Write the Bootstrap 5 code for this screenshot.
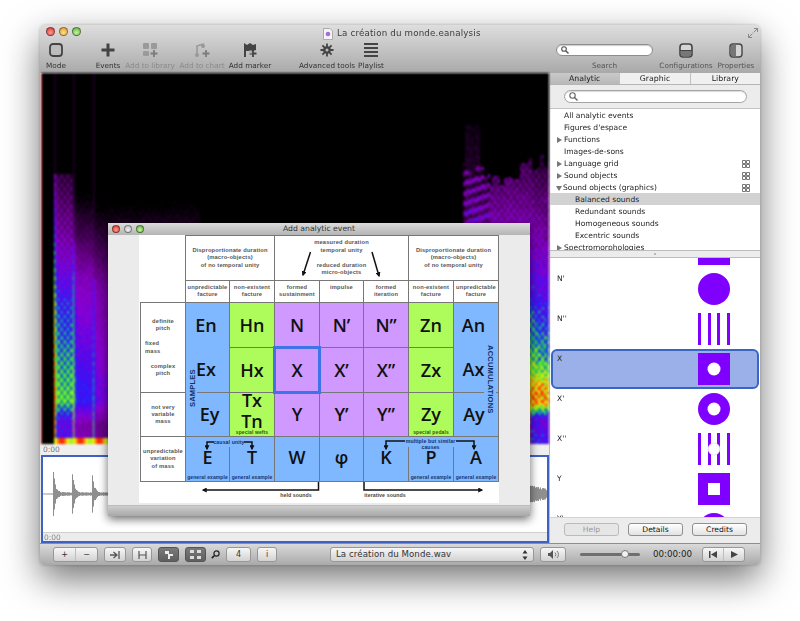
<!DOCTYPE html>
<html lang="fr">
<head>
    <meta charset="UTF-8">
    <meta name="viewport" content="width=device-width, initial-scale=1.0">
    <title>La création du monde.eanalysis</title>
    <link href="https://cdn.jsdelivr.net/npm/bootstrap@5.3.2/dist/css/bootstrap.min.css" rel="stylesheet">
    <style>
        body { background: #fff; font-family: "DejaVu Sans", sans-serif; color: #222; overflow: hidden; }

        /* main window */
        .mac-window { left: 40px; top: 25px; width: 720px; height: 540px; border-radius: 5px 5px 4px 4px; box-shadow: 0 14px 36px rgba(0,0,0,.55), 0 0 3px rgba(0,0,0,.25); overflow: hidden; background: #e8e8e8; filter: blur(.35px); }
        .mac-head { height: 48px; background: linear-gradient(#dedede, #a9a9a9); flex: none; }
        .title-row { height: 17px; padding: 2px 0 0 6px; }
        .light { width: 9px; height: 9px; border-radius: 50%; border: 1px solid rgba(0,0,0,.4); display: block; flex: none; }
        .light-red { background: radial-gradient(circle at 50% 65%, #ff9a90, #d3302a); }
        .light-amber { background: radial-gradient(circle at 50% 65%, #ffe28a, #d9922a); }
        .light-green { background: radial-gradient(circle at 50% 65%, #c8f5a0, #56a83a); }
        .light-off { background: radial-gradient(circle at 50% 65%, #f0f0f0, #b5b5b5); }
        .title-text { font-size: 8.7px; color: #3c3c3c; letter-spacing: .02em; }
        .title-box { left: 283px; top: 2px; }
        .resize-ico { right: 2px; top: 3px; }

        .tool-row { height: 31px; align-items: flex-start; }
        .tool { flex: none; display: flex; flex-direction: column; align-items: center; height: 31px; font-size: 7.3px; color: #333; line-height: 9px; white-space: nowrap; }
        .tool svg { height: 16px; margin-bottom: 3px; display: block; }
        .tool-off { color: #8b8b8b; }
        .t32 { width: 32px; } .t40 { width: 40px; } .t44 { width: 44px; } .t52 { width: 52px; } .t56 { width: 56px; } .t50 { width: 50px; } .t97 { width: 97px; }
        .ml-20 { margin-left: 20px; } .ml-27 { margin-left: 27px; } .ml-8 { margin-left: 8px; } .ml-5 { margin-left: 5px; }
        .tool-search { height: 12px; margin: 2px 0 5px; border-radius: 7px; background: #fff; border: 1px solid #8d8d8d; box-shadow: inset 0 1px 1px rgba(0,0,0,.2); padding-left: 4px; display: flex; align-items: center; width: 97px; }
        .tool-search svg { height: 8px; margin: 0; }
        .tool-soft { color: #555; }
        .tool-end { width: 4px; }

        .mac-main { height: 470px; flex: none; }
        .left-pane { width: 509px; flex: none; padding-left: 1px; background: #e8e8e8; }
        .spectro { width: 508px; height: 371px; display: block; filter: blur(.8px); }
        .time-strip { height: 11px; font-size: 7.5px; line-height: 11px; color: #777; background: #efefef; padding-left: 2px; }
        .wave-box { height: 88px; border: 2px solid #3d62c4; background: #fff; }
        .wave-cv { width: 504px; height: 75px; display: block; }
        .wave-strip { height: 9px; font-size: 7.5px; line-height: 9px; color: #888; background: #ececec; border-top: 1px solid #cfcfcf; padding-left: 1px; }

        /* right panel */
        .right-pane { width: 211px; flex: none; background: #fff; border-left: 1px solid #bbb; }
        .seg-tabs { height: 12px; font-size: 7.8px; line-height: 11px; background: #f0f0f0; border-bottom: 1px solid #b5b5b5; flex: none; }
        .seg-tab { flex: 1 1 0; text-align: center; color: #222; border-right: 1px solid #c0c0c0; }
        .seg-tab:last-child { border-right: 0; }
        .seg-on { background: linear-gradient(#c9c9c9, #b9b9b9); }
        .filter-row { height: 24px; flex: none; background: #ececec; border-bottom: 1px solid #c4c4c4; padding: 5px 13px 0 14px; }
        .filter-box { height: 13px; border-radius: 7px; background: #fff; border: 1px solid #a5a5a5; box-shadow: inset 0 1px 1px rgba(0,0,0,.15); padding-left: 4px; display: flex; align-items: center; }
        .tree-wrap { height: 141px; flex: none; overflow: hidden; }
        .tree-row.list-group-item { height: 12px; padding: 2px 10px 0 14px; border: 0; border-radius: 0; background: transparent; font-size: 7.55px; line-height: 10px; color: #222; display: flex; align-items: center; white-space: nowrap; }
        .tree-row.tree-sub { padding-left: 25px; }
        .tree-row.tree-sel { background: #d2d2d2; }
        .tree-open, .tree-shut { width: 0; height: 0; margin-left: -7px; margin-right: 2px; flex: none; }
        .tree-shut { border-left: 5px solid #777; border-top: 3px solid transparent; border-bottom: 3px solid transparent; }
        .tree-open { border-top: 5px solid #777; border-left: 3px solid transparent; border-right: 3px solid transparent; margin-left: -8px; margin-right: 1px; }
        .split-bar { height: 8px; flex: none; background: #ececec; border-top: 1px solid #bdbdbd; border-bottom: 1px solid #bdbdbd; display: flex; justify-content: center; align-items: center; }
        .split-dot { width: 2px; height: 2px; background: #aaa; border-radius: 50%; }
        .glyph-wrap { height: 259px; flex: none; overflow: hidden; }
        .glyph-list { margin-top: -29px; }
        .glyph-row { height: 40px; padding: 3px 2px 0 5px; font-size: 7.5px; color: #222; flex: none; border: 2px solid transparent; line-height: 10px; }
        .glyph-row svg { width: 32px; height: 32px; margin: -1px 26px 0 0; flex: none; display: block; }
        .glyph-on { background: #9bb0e8; border-color: #3a65c4; border-radius: 6px; margin: 0 1px; padding-left: 4px; }
        .glyph-on svg { margin-right: 25px; }
        .foot-row { height: 26px; flex: none; background: #ececec; border-top: 1px solid #d4d4d4; padding: 5px 13px 0 14px; gap: 9px; }
        .btn.foot-btn { width: 55px; height: 13px; padding: 0; font-size: 7.6px; line-height: 11px; color: #111; background: linear-gradient(#fff, #e2e2e2); border: 1px solid #8f8f8f; border-radius: 3px; }
        .btn.foot-btn:disabled { color: #999; border-color: #bbb; background: #e6e6e6; opacity: 1; }

        /* bottom bar */
        .mac-bar { height: 22px; flex: none; background: linear-gradient(#dadada, #a9a9a9); padding: 3px 0 0 13px; gap: 6px; border-top: 1px solid #8e8e8e; }
        .btn.bar-btn { height: 15px; padding: 0; font-size: 8px; line-height: 13px; color: #333; background: linear-gradient(#f7f7f7, #d2d2d2); border: 1px solid #979797; border-radius: 3px; display: flex; align-items: center; justify-content: center; flex: none; }
        .btn.bar-dark { background: linear-gradient(#7a7a7a, #5f5f5f); border-color: #555; }
        .bw-45 { width: 45px; } .bw-22 { width: 22px; } .bw-21 { width: 21px; } .bw-20 { width: 20px; } .bw-25 { width: 25px; } .bw-26 { width: 26px; } .bw-43 { width: 43px; }
        .split-half { flex: 1 1 0; height: 100%; display: flex; align-items: center; justify-content: center; border-right: 1px solid #bdbdbd; }
        .split-half:last-child { border-right: 0; }
        .loupe { width: 9px; margin-left: -1px; flex: none; display: flex; align-items: center; height: 15px; }
        .btn.bar-popup { width: 204px; margin-left: 47px; justify-content: space-between; padding: 0 5px; font-size: 8.6px; color: #333; letter-spacing: .01em; }
        .vol-track { width: 60px; height: 15px; margin-left: 8px; flex: none; display: flex; align-items: center; position: relative; }
        .vol-line { height: 3px; width: 100%; background: #6f6f6f; border-radius: 2px; }
        .vol-thumb { width: 8px; height: 8px; border-radius: 50%; background: #f2f2f2; border: 1px solid #777; left: 41px; top: 3px; }
        .clock { width: 40px; margin-left: 7px; font-size: 8.7px; line-height: 15px; color: #222; flex: none; white-space: nowrap; }
        .ml-3p { margin-left: 3px; }

        /* dialog */
        .sheet { left: 68px; top: 198px; width: 422px; height: 293px; background: #ebebeb; box-shadow: 0 3px 10px rgba(0,0,0,.6); z-index: 5; border-radius: 3px 3px 0 0; }
        .sheet-head { height: 12px; flex: none; background: linear-gradient(#dcdcdc, #b4b4b4); padding-left: 4px; gap: 4px; }
        .sheet-head .light { width: 8px; height: 8px; }
        .sheet-title { left: 0; right: 0; top: 0; font-size: 7.7px; line-height: 12px; text-align: center; color: #333; }
        .sheet-body { height: 270px; flex: none; padding-left: 31px; }
        .sheet-foot { height: 11px; flex: none; background: linear-gradient(#cdcdcd, #a8a8a8); border-top: 1px solid #bbb; }

        .chart { width: 360px; height: 268px; padding-left: 1px; background: #fff; display: grid; grid-template-columns: 45px 44px 45px 45px 44px 45px 45px 45px; grid-template-rows: 45px 22px 45px 45px 44px 45px 22px; font-family: "Open Sans", sans-serif; }
        .box { border: 1px solid #777; margin: 0 -1px -1px 0; position: relative; display: flex; flex-direction: column; align-items: center; justify-content: center; text-align: center; }
        .note { font-size: 5.75px; font-weight: 700; line-height: 7.3px; color: #555; font-family: "Liberation Sans", sans-serif; letter-spacing: .03em; }
        .note-top { justify-content: flex-start; padding-top: 3px; }
        .big { font-size: 18px; font-weight: 600; line-height: 21px; color: #111; }
        .big-two { justify-content: space-around; padding-right: 3px; }
        .big-two-r { padding: 0 5px 0 0; }
        .tone-blue { background: #80b8ff; }
        .tone-green { background: #aefc5c; }
        .tone-purple { background: #d099ff; }
        .cell-on { border: 3px solid #3f73e8; margin: -1px -2px -2px -1px; z-index: 1; }
        .span-2c { grid-column: span 2; }
        .span-3c { grid-column: span 3; }
        .span-2r { grid-row: span 2; }
        .cap { font-family: "Liberation Sans", sans-serif; left: 0; right: 0; bottom: 1px; font-size: 5px; font-weight: 700; line-height: 6px; color: #17356b; letter-spacing: .02em; white-space: nowrap; }
        .cap-green { color: #2c5a12; }
        .overlay { left: 0; top: 0; width: 360px; height: 268px; z-index: 2; pointer-events: none; }
        .overlay text { font-family: "Liberation Sans", sans-serif; }
        .ov-side { font-size: 7.6px; font-weight: 700; fill: #13306a; letter-spacing: .02em; }
        .ov-tiny { font-size: 5.2px; font-weight: 700; fill: #13306a; letter-spacing: .02em; }
        .ov-gray { font-size: 5.2px; font-weight: 700; fill: #444; letter-spacing: .02em; }
    </style>
</head>
<body>

<div class="mac-window position-absolute d-flex flex-column">
    <!-- title + toolbar -->
    <div class="mac-head position-relative">
        <div class="title-row d-flex gap-1 position-relative">
            <span class="light light-red"></span>
            <span class="light light-amber"></span>
            <span class="light light-green"></span>
            <div class="title-box position-absolute d-flex align-items-center gap-1">
                <svg width="10" height="12" viewBox="0 0 10 12"><path d="M.5.5h6.5l2.500 2.500v8.500h-9z" fill="#f4f4f4" stroke="#aaa"/><circle cx="5" cy="6" r="2.300" fill="#a070d8"/></svg>
                <span class="title-text">La création du monde.eanalysis</span>
            </div>
            <svg class="resize-ico position-absolute" width="10" height="10" viewBox="0 0 10 10"><path d="M5.500 4.500 9.500.5M6 .5h3.500v3.500M4.500 5.500.5 9.500M.5 6v3.500H4" fill="none" stroke="#888"/></svg>
        </div>
        <div class="tool-row d-flex">
            <div class="tool t32">
                <svg width="14" height="16" viewBox="0 0 14 16"><rect x="1" y="2" width="12" height="12" rx="3" fill="#bdbdbd" stroke="#444" stroke-width="1.800"/></svg>
                Mode
            </div>
            <div class="tool t32 ml-20">
                <svg width="14" height="16" viewBox="0 0 14 16"><path d="M7 1.500v13M.5 8h13" stroke="#444" stroke-width="3"/></svg>
                Events
            </div>
            <div class="tool t52 tool-off">
                <svg width="16" height="16" viewBox="0 0 16 16"><g fill="#9a9a9a"><rect x="1" y="1" width="6" height="6" rx="1"/><rect x="9" y="1" width="6" height="6" rx="1"/><rect x="1" y="9" width="6" height="5" rx="1"/></g><path d="M12 8v7M8.500 11.500h7" stroke="#7d7d7d" stroke-width="1.800"/></svg>
                Add to library
            </div>
            <div class="tool t52 tool-off">
                <svg width="16" height="16" viewBox="0 0 16 16"><path d="M3 14V4l6-2v4" fill="none" stroke="#999" stroke-width="1.600"/><circle cx="3" cy="13" r="2" fill="#999"/><circle cx="9" cy="4" r="2" fill="#999"/><path d="M12 8v7M8.500 11.500h7" stroke="#7d7d7d" stroke-width="1.800"/></svg>
                Add to chart
            </div>
            <div class="tool t44">
                <svg width="16" height="16" viewBox="0 0 16 16"><path d="M2 15V1l3 2 3-2 3 2 3-1v6l-3 1H4v6z" fill="#444"/><path d="M11 8v7M7.500 11.500h7" stroke="#444" stroke-width="1.800"/><path d="M7 8.500h3v3H7z" fill="#b0b0b0"/></svg>
                Add marker
            </div>
            <div class="tool t56 ml-27">
                <svg width="16" height="16" viewBox="0 0 16 16"><circle cx="8" cy="8" r="3.800" fill="#444"/><path d="M8 1.500v13M1.500 8h13M3.400 3.400l9.200 9.200M12.600 3.400l-9.200 9.200" stroke="#444" stroke-width="1.800"/><circle cx="8" cy="8" r="1.500" fill="#bbb"/></svg>
                Advanced tools
            </div>
            <div class="tool t32">
                <svg width="14" height="16" viewBox="0 0 14 16"><path d="M0 2h14M0 6h14M0 10h14M0 14h14" stroke="#444" stroke-width="2"/></svg>
                Playlist
            </div>
            <div class="tool t97 ms-auto">
                <div class="tool-search"><svg width="8" height="8" viewBox="0 0 8 8"><circle cx="3" cy="3" r="2.300" fill="none" stroke="#555" stroke-width="1.100"/><path d="m5 5 2.500 2.500" stroke="#555" stroke-width="1.400"/></svg></div>
                <span class="tool-soft">Search</span>
            </div>
            <div class="tool t50 ml-8">
                <svg width="14" height="16" viewBox="0 0 14 16"><rect x="1" y="2" width="12" height="13" rx="3" fill="#d5d5d5" stroke="#444" stroke-width="1.600"/><path d="M1.800 8.500h10.400v4.200a1.500 1.500 0 0 1-1.500 1.500H3.300a1.500 1.500 0 0 1-1.500-1.500z" fill="#777"/><path d="M1 8.500h12" stroke="#444"/></svg>
                <span class="tool-soft">Configurations</span>
            </div>
            <div class="tool t40 ml-5">
                <svg width="14" height="16" viewBox="0 0 14 16"><rect x="1" y="2" width="12" height="13" rx="3" fill="#d5d5d5" stroke="#444" stroke-width="1.400"/><path d="M2 3.500a1 1 0 0 1 1-1h4v12H3a1 1 0 0 1-1-1z" fill="#777"/></svg>
                <span class="tool-soft">Properties</span>
            </div>
            <div class="tool-end"></div>
        </div>
    </div>

    <div class="mac-main d-flex">
        <!-- spectrogram and waveform -->
        <div class="left-pane d-flex flex-column">
            <canvas id="spectro" class="spectro" width="508" height="371"></canvas>
            <div class="time-strip">0:00</div>
            <div class="wave-box">
                <canvas id="wave" class="wave-cv" width="504" height="75"></canvas>
                <div class="wave-strip">0:00</div>
            </div>
        </div>

        <!-- properties panel -->
        <div class="right-pane d-flex flex-column">
            <div class="seg-tabs d-flex">
                <div class="seg-tab seg-on">Analytic</div>
                <div class="seg-tab">Graphic</div>
                <div class="seg-tab">Library</div>
            </div>
            <div class="filter-row">
                <div class="filter-box"><svg width="9" height="9" viewBox="0 0 9 9"><circle cx="3.500" cy="3.500" r="2.700" fill="none" stroke="#666" stroke-width="1.100"/><path d="m5.500 5.500 3 3" stroke="#666" stroke-width="1.400"/></svg></div>
            </div>
            <div class="tree-wrap">
                <ul class="list-group list-group-flush">
                    <li class="list-group-item tree-row">All analytic events</li>
                    <li class="list-group-item tree-row">Figures d'espace</li>
                    <li class="list-group-item tree-row"><span class="tree-shut"></span>Functions</li>
                    <li class="list-group-item tree-row">Images-de-sons</li>
                    <li class="list-group-item tree-row"><span class="tree-shut"></span>Language grid
                        <svg class="ms-auto" width="8" height="8" viewBox="0 0 8 8"><path d="M.5.5h3v3h-3zM4.500.5h3v3h-3zM.5 4.500h3v3h-3zM4.500 4.500h3v3h-3z" fill="none" stroke="#777"/></svg></li>
                    <li class="list-group-item tree-row"><span class="tree-shut"></span>Sound objects
                        <svg class="ms-auto" width="8" height="8" viewBox="0 0 8 8"><path d="M.5.5h3v3h-3zM4.500.5h3v3h-3zM.5 4.500h3v3h-3zM4.500 4.500h3v3h-3z" fill="none" stroke="#777"/></svg></li>
                    <li class="list-group-item tree-row"><span class="tree-open"></span>Sound objects (graphics)
                        <svg class="ms-auto" width="8" height="8" viewBox="0 0 8 8"><path d="M.5.5h3v3h-3zM4.500.5h3v3h-3zM.5 4.500h3v3h-3zM4.500 4.500h3v3h-3z" fill="none" stroke="#777"/></svg></li>
                    <li class="list-group-item tree-row tree-sub tree-sel">Balanced sounds</li>
                    <li class="list-group-item tree-row tree-sub">Redundant sounds</li>
                    <li class="list-group-item tree-row tree-sub">Homogeneous sounds</li>
                    <li class="list-group-item tree-row tree-sub">Excentric sounds</li>
                    <li class="list-group-item tree-row"><span class="tree-shut"></span>Spectromorphologies</li>
                </ul>
            </div>
            <div class="split-bar"><span class="split-dot"></span></div>
            <div class="glyph-wrap">
                <div class="glyph-list d-flex flex-column">
                    <div class="glyph-row d-flex justify-content-between">N
                        <svg viewBox="0 0 32 32"><rect width="32" height="32" fill="#8000ff"/></svg></div>
                    <div class="glyph-row d-flex justify-content-between">N'
                        <svg viewBox="0 0 32 32"><circle cx="16" cy="16" r="16" fill="#8000ff"/></svg></div>
                    <div class="glyph-row d-flex justify-content-between">N''
                        <svg viewBox="0 0 32 32"><path d="M0 0h3v32H0zM10 0h3v32h-3zM19 0h3v32h-3zM29 0h3v32h-3z" fill="#8000ff"/></svg></div>
                    <div class="glyph-row glyph-on d-flex justify-content-between">X
                        <svg viewBox="0 0 32 32"><rect width="32" height="32" fill="#8000ff"/><circle cx="16" cy="16" r="6.500" fill="#fff"/></svg></div>
                    <div class="glyph-row d-flex justify-content-between">X'
                        <svg viewBox="0 0 32 32"><circle cx="16" cy="16" r="16" fill="#8000ff"/><circle cx="16" cy="16" r="6.500" fill="#fff"/></svg></div>
                    <div class="glyph-row d-flex justify-content-between">X''
                        <svg viewBox="0 0 32 32"><path d="M0 0h3v32H0zM10 0h3v32h-3zM19 0h3v32h-3zM29 0h3v32h-3z" fill="#8000ff"/><circle cx="16" cy="16" r="6" fill="#fff" stroke="#e8d0ff" stroke-width=".6"/></svg></div>
                    <div class="glyph-row d-flex justify-content-between">Y
                        <svg viewBox="0 0 32 32"><rect width="32" height="32" fill="#8000ff"/><rect x="10" y="10" width="12" height="12" fill="#fff"/></svg></div>
                    <div class="glyph-row d-flex justify-content-between">Y'
                        <svg viewBox="0 0 32 32"><circle cx="16" cy="16" r="16" fill="#8000ff"/></svg></div>
                </div>
            </div>
            <div class="foot-row d-flex">
                <button class="btn foot-btn" disabled>Help</button>
                <button class="btn foot-btn">Details</button>
                <button class="btn foot-btn">Credits</button>
            </div>
        </div>
    </div>

    <!-- bottom controls -->
    <div class="mac-bar d-flex">
        <div class="btn bar-btn bw-45"><span class="split-half">+</span><span class="split-half">−</span></div>
        <div class="btn bar-btn bw-22"><svg width="11" height="8" viewBox="0 0 11 8"><path d="M0 4h6M3.500 1 7 4 3.500 7M9 0v8" fill="none" stroke="#555" stroke-width="1.300"/></svg></div>
        <div class="btn bar-btn bw-20"><svg width="9" height="8" viewBox="0 0 9 8"><path d="M1 0v8M8 0v8M1 4h7" stroke="#555" stroke-width="1.200"/></svg></div>
        <div class="btn bar-btn bar-dark bw-21"><svg width="10" height="10" viewBox="0 0 10 10"><path d="M1 1h4v3h4v2H6v3H4V4H1z" fill="#eee"/></svg></div>
        <div class="btn bar-btn bar-dark bw-21"><svg width="11" height="9" viewBox="0 0 11 9"><path d="M0 0h4v3H0zM7 0h4v3H7zM0 6h4v3H0zM7 6h4v3H7z" fill="#ddd"/></svg></div>
        <div class="loupe"><svg width="9" height="9" viewBox="0 0 9 9"><circle cx="5.500" cy="3.500" r="2.600" fill="none" stroke="#222" stroke-width="1.200"/><path d="M3.500 5.500.8 8.200" stroke="#222" stroke-width="1.700"/></svg></div>
        <div class="btn bar-btn bw-25">4</div>
        <div class="btn bar-btn bw-20">i</div>
        <div class="btn bar-btn bar-popup"><span>La création du Monde.wav</span>
            <svg width="6" height="10" viewBox="0 0 6 10"><path d="M3 0 5.500 3.500H.5zM3 10 .5 6.500h5z" fill="#333"/></svg></div>
        <div class="btn bar-btn bw-26"><svg width="11" height="9" viewBox="0 0 11 9"><path d="M0 3h2l3-3v9L2 6H0z" fill="#555"/><path d="M7 2.500a3 3 0 0 1 0 4M9 1a5 5 0 0 1 0 7" fill="none" stroke="#777"/></svg></div>
        <div class="vol-track"><div class="vol-line"></div><span class="vol-thumb position-absolute"></span></div>
        <div class="clock">00:00:00</div>
        <div class="btn bar-btn bw-43 ml-3p"><span class="split-half"><svg width="8" height="7" viewBox="0 0 8 7"><path d="M0 0h1.500v7H0zM8 0v7L2 3.500z" fill="#444"/></svg></span><span class="split-half"><svg width="7" height="7" viewBox="0 0 7 7"><path d="M0 0l7 3.500L0 7z" fill="#444"/></svg></span></div>
    </div>

    <!-- Add analytic event -->
    <div class="sheet position-absolute d-flex flex-column">
        <div class="sheet-head d-flex align-items-center position-relative">
            <span class="light light-red"></span>
            <span class="light light-off"></span>
            <span class="light light-green"></span>
            <div class="sheet-title position-absolute">Add analytic event</div>
        </div>
        <div class="sheet-body">
            <div class="chart position-relative">
                <!-- row 1 -->
                <div></div>
                <div class="box note span-2c">Disproportionate duration<br>(macro-objects)<br>of no temporal unity</div>
                <div class="box note span-3c"><div class="mb-2">measured duration<br>temporal unity</div><div>reduced duration<br>micro-objects</div></div>
                <div class="box note span-2c">Disproportionate duration<br>(macro-objects)<br>of no temporal unity</div>
                <!-- row 2 -->
                <div></div>
                <div class="box note note-top">unpredictable<br>facture</div>
                <div class="box note note-top">non-existent<br>facture</div>
                <div class="box note note-top">formed<br>sustainment</div>
                <div class="box note note-top">impulse</div>
                <div class="box note note-top">formed<br>iteration</div>
                <div class="box note note-top">non-existent<br>facture</div>
                <div class="box note note-top">unpredictable<br>facture</div>
                <!-- rows 3 and 4 -->
                <div class="box note span-2r">
                    <div>definite<br>pitch</div>
                    <div class="align-self-start text-start my-2 ps-1">fixed<br>mass</div>
                    <div>complex<br>pitch</div>
                </div>
                <div class="box big big-two tone-blue span-2r"><span>En</span><span>Ex</span></div>
                <div class="box big tone-green">Hn</div>
                <div class="box big tone-purple">N</div>
                <div class="box big tone-purple">N’</div>
                <div class="box big tone-purple">N”</div>
                <div class="box big tone-green">Zn</div>
                <div class="box big big-two big-two-r tone-blue span-2r"><span>An</span><span>Ax</span></div>
                <div class="box big tone-green">Hx</div>
                <div class="box big tone-purple cell-on">X</div>
                <div class="box big tone-purple">X’</div>
                <div class="box big tone-purple">X”</div>
                <div class="box big tone-green">Zx</div>
                <!-- row 5 -->
                <div class="box note">not very<br>variable<br>mass</div>
                <div class="box big tone-blue ps-1">Ey</div>
                <div class="box big tone-green pb-2">Tx<br>Tn<span class="cap cap-green position-absolute">special wefts</span></div>
                <div class="box big tone-purple">Y</div>
                <div class="box big tone-purple">Y’</div>
                <div class="box big tone-purple">Y”</div>
                <div class="box big tone-green">Zy<span class="cap cap-green position-absolute">special pedals</span></div>
                <div class="box big tone-blue pe-1">Ay</div>
                <!-- row 6 -->
                <div class="box note">unpredictable<br>variation<br>of mass</div>
                <div class="box big tone-blue pb-1">E<span class="cap position-absolute">general example</span></div>
                <div class="box big tone-blue pb-1">T<span class="cap position-absolute">general example</span></div>
                <div class="box big tone-blue pb-1">W</div>
                <div class="box big tone-blue pb-1">φ</div>
                <div class="box big tone-blue pb-1">K</div>
                <div class="box big tone-blue pb-1">P<span class="cap position-absolute">general example</span></div>
                <div class="box big tone-blue pb-1">A<span class="cap position-absolute">general example</span></div>

                <!-- arrows and side labels over the chart, page coordinates -->
                <svg class="overlay position-absolute" viewBox="139 235 360 268">
                    <defs>
                        <marker id="tip" viewBox="0 0 6 6" refX="4.500" refY="3" markerWidth="5" markerHeight="5" orient="auto-start-reverse" markerUnits="userSpaceOnUse"><path d="M0 0 6 3 0 6z" fill="#111"/></marker>
                    </defs>
                    <g fill="none" stroke="#111" stroke-width="1.500" marker-end="url(#tip)">
                        <path d="M310.500 252 303 275"/>
                        <path d="M372 252 379 276"/>
                    </g>
                    <!-- gaps in the grid lines -->
                    <g fill="#80b8ff">
                        <rect x="228" y="437" width="3" height="10"/>
                        <rect x="407" y="437" width="3" height="10"/>
                        <rect x="452" y="437" width="3" height="10"/>
                        <rect x="186" y="390" width="11" height="4"/>
                        <rect x="484" y="390" width="12" height="4"/>
                    </g>
                    <g fill="none" stroke="#111" stroke-width="1.500">
                        <path d="M318.500 482V490H203" marker-end="url(#tip)"/>
                        <path d="M364 482V490H482" marker-end="url(#tip)"/>
                        <path d="M214 442H207V449" marker-end="url(#tip)"/>
                        <path d="M244 442H252V449" marker-end="url(#tip)"/>
                        <path d="M405 441H386V449" marker-end="url(#tip)"/>
                        <path d="M456 441H474V449" marker-end="url(#tip)"/>
                    </g>
                    <text class="ov-side" transform="translate(195 407) rotate(-90)">SAMPLES</text>
                    <text class="ov-side" transform="translate(488 345) rotate(90)">ACCUMULATIONS</text>
                    <text class="ov-tiny" x="229" y="444" text-anchor="middle">causal unity</text>
                    <text class="ov-tiny" x="430.500" y="443" text-anchor="middle">multiple but similar</text>
                    <text class="ov-tiny" x="430.500" y="449" text-anchor="middle">causes</text>
                    <text class="ov-gray" x="296" y="497" text-anchor="middle">held sounds</text>
                    <text class="ov-gray" x="385" y="497" text-anchor="middle">iterative sounds</text>
                </svg>
            </div>
        </div>
        <div class="sheet-foot"></div>
    </div>
</div>

<script>
    // Petit bruit déterministe pour la texture du spectrogramme
    function noise(x, y) {
        const s = Math.sin(x * 12.9898 + y * 78.233) * 43758.5453;
        return s - Math.floor(s);
    }

    // Palette : noir > violet > bleu > vert > jaune > rouge
    const stops = [
        [0, 0, 0, 0], [0.12, 40, 0, 50], [0.3, 100, 0, 130], [0.45, 140, 0, 210],
        [0.56, 70, 10, 240], [0.64, 30, 40, 255], [0.72, 20, 190, 120], [0.8, 90, 235, 30],
        [0.9, 245, 245, 20], [1, 255, 40, 0]
    ];
    function paint(v) {
        v = Math.max(0, Math.min(1, v));
        for (let i = 1; i < stops.length; i++) {
            if (v <= stops[i][0]) {
                const a = stops[i - 1], b = stops[i], k = (v - a[0]) / (b[0] - a[0]);
                return [a[1] + (b[1] - a[1]) * k, a[2] + (b[2] - a[2]) * k, a[3] + (b[3] - a[3]) * k];
            }
        }
        return [255, 40, 0];
    }

    function clamp01(a) { return Math.max(0, Math.min(1, a)); }

    // x, y en coordonnées de la page
    function level(x, y) {
        const f = (444 - y) / 371;
        let v = 0;
        const blob = Math.sin(y / 1.35) * Math.sin(x / 1.0);
        const grain = noise(Math.floor(x / 2), Math.floor(y / 2)) - 0.5;
        if (x >= 54 && x < 200) {
            let t;
            if (x < 73) {
                t = x - 54;
                v = 0.86 - 0.7 * f - 0.6 * Math.max(0, f - 0.38) + 0.28 * Math.exp(-t / 1.3);
                v += 0.12 * blob + 0.05 * grain;
                v -= 0.3 * clamp01((0.12 - f) / 0.06) * clamp01(t / 2);
                if (f > 0.73) v = 0;
            } else if (x < 93) {
                t = x - 73;
                v = 0.68 - 0.62 * f - 1.2 * Math.max(0, f - 0.45) + 0.3 * Math.exp(-t / 1.3) * (f < 0.55 ? 1 : 0.4);
                v += 0.07 * grain + 0.03 * blob;
                v -= 0.28 * clamp01((0.12 - f) / 0.07) * clamp01(t / 2);
            } else {
                t = x - 93;
                v = 0.55 - 0.45 * f - 1.2 * Math.max(0, f - 0.42) + 0.22 * Math.exp(-t / 1.3) * (f < 0.45 ? 1 : 0.3);
                v += 0.07 * grain + 0.03 * blob;
                v -= 0.22 * clamp01((0.12 - f) / 0.07) * clamp01(t / 2);
            }
            if (f < 0.018) v = 0.93 + 0.08 * Math.sin(x / 3);
            if (t < 1.2 && v < 0.07) v = 0.07;
        }
        if (x >= 463) {
            const col = noise(Math.floor(x / 4), 7);
            let top = x < 490 ? 0.74 : (x < 520 ? 0.71 : 0.76);
            top += col * 0.04 - 0.02;
            v = 1.02 - 1.1 * f + 0.1 * blob + 0.14 * grain;
            v *= clamp01((x - 461) / 4);
            if (x < 490 && f > 0.6) v += 0.17 * Math.sin((y + (x - 463) * 0.35) / 1.6);
            if (x >= 530) {
                v -= (x - 530) * 0.003;
                v += 0.1 * Math.exp(-Math.pow((f - 0.14) / 0.06, 2));
                v -= 0.42 * clamp01((0.11 - f) / 0.04);
            }
            if (f > top) {
                // dernières traces au-dessus du corps du son
                v = (x > 464 && x < 480 && f < 0.86) ? 0.1 + 0.1 * grain - (f - top) * 0.5 : 0;
            }
        }
        return v;
    }

    const sp = document.getElementById('spectro').getContext('2d');
    const img = sp.createImageData(508, 371);
    for (let py = 0; py < 371; py++) {
        for (let px = 0; px < 508; px++) {
            const c = paint(level(px + 41, py + 73));
            const i = (py * 508 + px) * 4;
            img.data[i] = c[0]; img.data[i + 1] = c[1]; img.data[i + 2] = c[2]; img.data[i + 3] = 255;
        }
    }
    sp.putImageData(img, 0, 0);
    sp.fillStyle = '#c8202a';
    sp.fillRect(0, 0, 1, 371);

    // Forme d'onde : centre à y=494 sur la page
    const wv = document.getElementById('wave').getContext('2d');
    wv.fillStyle = '#8f8f8f';
    const mid = 494 - 457;
    for (let px = 0; px < 504; px++) {
        const x = px + 43;
        let h = 0.5;
        [[54, 12], [73, 11], [93, 10]].forEach(function (s) {
            if (x >= s[0] - 1 && x < s[0] + 19) h = Math.max(h, 1.5 + s[1] * Math.exp(-(x - s[0]) / 2));
        });
        if (x >= 525) h = 8 - (x - 530) * 0.22;
        h *= 0.8 + 0.4 * noise(x, 3);
        wv.fillRect(px, mid - h, 1, h * 2);
    }
</script>
<script src="https://cdn.jsdelivr.net/npm/bootstrap@5.3.2/dist/js/bootstrap.bundle.min.js"></script>
</body>
</html>
